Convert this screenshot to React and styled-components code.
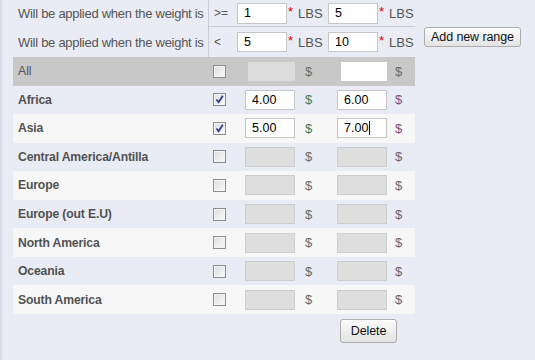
import styled, { createGlobalStyle } from "styled-components"

const GlobalStyle = createGlobalStyle`
  body {
    margin: 0;
    background: #e9ecf4;
    font-family: "Liberation Sans", Arial, sans-serif;
  }
`

const Page = styled.div`
  min-height: 360px;
  box-sizing: border-box;
  border-left: 2px solid #d9dce5;
  padding-left: 11px;
`

const TopArea = styled.div`
  display: flex;
  align-items: flex-start;
`

const RangeTable = styled.div`
  width: 402px;
`

const RangeRow = styled.div`
  display: flex;
  height: ${p => p.$h}px;
`

const RangeLabel = styled.div`
  width: 195px;
  padding-left: 5px;
  box-sizing: border-box;
  display: flex;
  align-items: center;
  font-size: 13px;
  letter-spacing: -0.28px;
  color: #555;
`

const RangeCells = styled.div`
  flex: 1;
  display: flex;
  align-items: center;
  border-left: 1px solid #c9ccd4;
  border-bottom: ${p => (p.$line ? "1px solid #c9ccd4" : "none")};
`

const Operator = styled.div`
  width: 28px;
  padding-left: 5px;
  box-sizing: border-box;
  font-size: 12px;
  color: #555;
`

const Unit = styled.div`
  width: ${p => p.$w}px;
  padding-left: 1px;
  box-sizing: border-box;
  display: flex;
  align-items: center;
  font-size: 13px;
  color: #555;
`

const Req = styled.span`
  color: #e00000;
  font-size: 13px;
  margin-right: 5px;
  position: relative;
  top: -2px;
`

const Field = styled.div`
  width: ${p => (p.$w ? p.$w : 50)}px;
  height: ${p => (p.$h ? p.$h : 20)}px;
  margin-left: ${p => (p.$offset ? p.$offset : 0)}px;
  box-sizing: border-box;
  display: flex;
  align-items: center;
  padding-left: 6px;
  font-size: 12.5px;
  color: #000;
  background: ${p => (p.$off ? "#dedede" : "#fff")};
  border: 1px solid ${p => (p.$off ? "#cdcdcd" : "#c6c6c6")};
  ${p => p.$bare && "border: none;"}
  ${p => p.$fill && `background: ${p.$fill};`}
`

const Caret = styled.span`
  display: inline-block;
  width: 1px;
  height: 14px;
  margin-left: 1px;
  background: #000;
`

const Button = styled.button`
  width: ${p => p.$w}px;
  height: ${p => p.$h}px;
  padding: 0;
  font-family: "Liberation Sans", Arial, sans-serif;
  font-size: 12.5px;
  letter-spacing: -0.1px;
  color: #111;
  background: linear-gradient(#fbfbfb, #e3e3e3);
  border: 1px solid #adadad;
  border-radius: 3px;
  box-shadow: inset 0 1px 0 #fff;
`

const AddButton = styled(Button)`
  margin: 27px 0 0 9px;
`

const ZoneTable = styled.div`
  width: 402px;
`

const shades = {
  all: "#c8c8c8",
  light: "#f7f7f8",
  plain: "transparent",
}

const ZoneRow = styled.div`
  display: grid;
  grid-template-columns: 200px 32px 50px 42px 50px 1fr;
  align-items: center;
  height: 28.55px;
  background: ${p => shades[p.$shade]};
`

const ZoneName = styled.div`
  padding-left: 5px;
  font-size: 12.2px;
  font-weight: ${p => (p.$bold ? 700 : 400)};
  letter-spacing: ${p => (p.$bold ? "-0.15px" : "0")};
  color: #525252;
`

const Dollar = styled.div`
  padding-left: ${p => p.$pad}px;
  font-size: 13px;
  color: ${p => p.$color};
`

const Box = styled.span`
  width: 13px;
  height: 13px;
  box-sizing: border-box;
  display: flex;
  align-items: center;
  justify-content: center;
  border: 1px solid #8e8e8e;
  background: linear-gradient(135deg, #dcdcdc, #fbfbfb);
  box-shadow: inset 0 0 0 1px #f4f4f4;
`

const Footer = styled.div`
  padding: 5px 0 0 327px;
`

const Check = ({ on }) => (
  <Box>
    {on && (
      <svg width="11" height="11" viewBox="0 0 11 11">
        <path d="M2.5 5.5 L4.6 8.3 L8.8 1.8" fill="none" stroke="#2d3d8f" strokeWidth="1.8" />
      </svg>
    )}
  </Box>
)

const zones = [
  { name: "Africa", on: true, a: "4.00", b: "6.00" },
  { name: "Asia", on: true, a: "5.00", b: "7.00", caret: true },
  { name: "Central America/Antilla" },
  { name: "Europe" },
  { name: "Europe (out E.U)" },
  { name: "North America" },
  { name: "Oceania" },
  { name: "South America" },
]

const App = () => {
  return (
    <Page>
      <GlobalStyle />
      <TopArea>
        <RangeTable>
          <RangeRow $h={27}>
            <RangeLabel>Will be applied when the weight is</RangeLabel>
            <RangeCells $line>
              <Operator>&gt;=</Operator>
              <Field $h={21}>1</Field>
              <Unit $w={41}><Req>*</Req>LBS</Unit>
              <Field $h={21}>5</Field>
              <Unit $w={36}><Req>*</Req>LBS</Unit>
            </RangeCells>
          </RangeRow>
          <RangeRow $h={30}>
            <RangeLabel>Will be applied when the weight is</RangeLabel>
            <RangeCells>
              <Operator>&lt;</Operator>
              <Field>5</Field>
              <Unit $w={41}><Req>*</Req>LBS</Unit>
              <Field>10</Field>
              <Unit $w={36}><Req>*</Req>LBS</Unit>
            </RangeCells>
          </RangeRow>
        </RangeTable>
        <AddButton $w={97} $h={20}>Add new range</AddButton>
      </TopArea>

      <ZoneTable>
        <ZoneRow $shade="all">
          <ZoneName>All</ZoneName>
          <Check />
          <Field $bare $w={47} $h={19} $offset={3} $fill="#dcdcdc" />
          <Dollar $pad={10} $color="#5f6f66">$</Dollar>
          <Field $bare $w={46} $h={19} $offset={4} />
          <Dollar $pad={8} $color="#5f6f66">$</Dollar>
        </ZoneRow>
        {zones.map((z, i) => (
          <ZoneRow key={z.name} $shade={i % 2 === 1 ? "light" : "plain"}>
            <ZoneName $bold>{z.name}</ZoneName>
            <Check on={z.on} />
            <Field $off={!z.on}>{z.a}</Field>
            <Dollar $pad={10} $color={z.on ? "#3f7d58" : "#666b68"}>$</Dollar>
            <Field $off={!z.on}>
              {z.b}
              {z.caret && <Caret />}
            </Field>
            <Dollar $pad={8} $color={z.on ? "#7a4f86" : "#6b6470"}>$</Dollar>
          </ZoneRow>
        ))}
      </ZoneTable>

      <Footer>
        <Button $w={57} $h={24}>Delete</Button>
      </Footer>
    </Page>
  )
}

export default App
